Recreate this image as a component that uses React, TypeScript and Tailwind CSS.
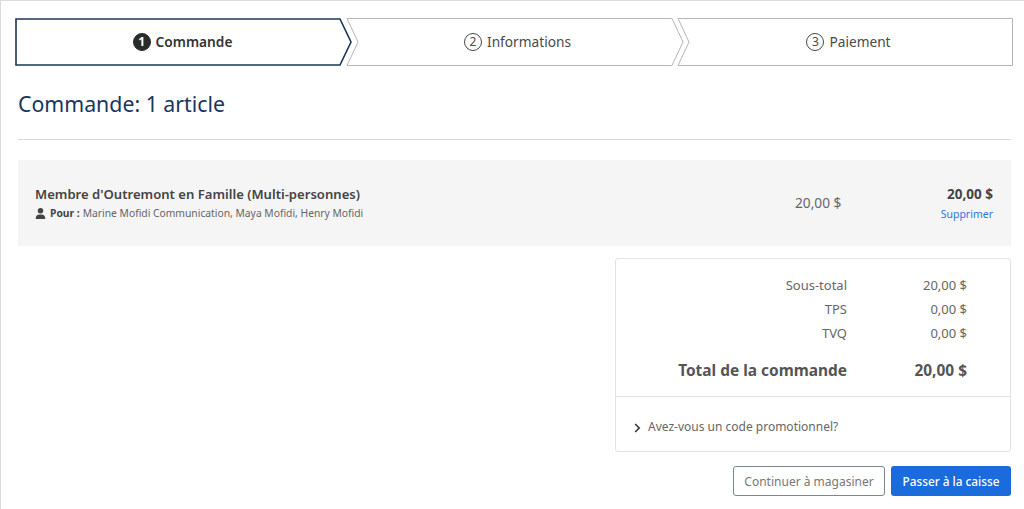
import React from "react";

const font = { fontFamily: "'Noto Sans', sans-serif" };

const StepNumber = ({ n, active }: { n: number; active?: boolean }) => (
  <span
    className={`flex h-[18px] w-[18px] items-center justify-center rounded-full border text-[12px] leading-none ${
      active
        ? "border-[#2b2b2b] bg-[#2b2b2b] font-bold text-white"
        : "border-[#4a4a4a] text-[#4a4a4a]"
    }`}
  >
    {n}
  </span>
);

const Step = ({
  n,
  label,
  points,
  width,
  active,
  offset,
}: {
  n: number;
  label: string;
  points: string;
  width: number;
  active?: boolean;
  offset: string;
}) => (
  <div className={`relative flex h-12 shrink-0 items-center justify-center ${offset}`} style={{ width }}>
    <svg className="absolute inset-0" width={width} height={48} viewBox={`0 0 ${width} 48`} fill="none">
      <polygon
        points={points}
        stroke={active ? "#1d3557" : "#b5b5b5"}
        strokeWidth={active ? 1.6 : 1}
        fill="#fff"
      />
    </svg>
    <span className="relative flex items-center gap-[5px] pt-px">
      <StepNumber n={n} active={active} />
      <span className={`text-[13.7px] ${active ? "font-semibold text-[#333]" : "text-[#4a4a4a]"}`}>{label}</span>
    </span>
  </div>
);

const SummaryRow = ({ label, value }: { label: string; value: string }) => (
  <div className="flex h-6 items-center justify-end text-[13px] text-[#666]">
    <span>{label}</span>
    <span className="w-[120px] text-right">{value}</span>
  </div>
);

export default function App() {
  return (
    <div style={font} className="h-[509px] w-[1024px] overflow-hidden border-l border-t border-[#dcdcdc] bg-white">
      {/* Steps */}
      <div className="ml-[14px] mt-[17px] flex">
        <Step n={1} label="Commande" active width={338} offset="pr-[3px]" points="1,1 325,1 336,24 325,47 1,47" />
        <Step
          n={2}
          label="Informations"
          width={338}
          offset="-ml-[7px] pl-[5px]"
          points="1,0.5 326,0.5 337,24 326,47.5 1,47.5 12,24"
        />
        <Step
          n={3}
          label="Paiement"
          width={336}
          offset="-ml-[7px] pl-[7px]"
          points="1,0.5 335.5,0.5 335.5,47.5 1,47.5 12,24"
        />
      </div>

      <div className="ml-[17px] w-[993px]">
        <h1 className="mt-[22px] text-[21.3px] leading-[32px] text-[#17375e]">Commande: 1 article</h1>
        <div className="mt-[19px] border-t border-[#d9d9d9]" />

        {/* Item */}
        <div className="mt-5 flex h-[86px] items-center bg-[#f5f5f5] pl-[17px] pr-[18px]">
          <div className="flex-1">
            <div className="text-[13.1px] font-semibold leading-[18px] text-[#444]">
              Membre d'Outremont en Famille (Multi-personnes)
            </div>
            <div className="mt-[2px] flex items-center text-[10.3px] leading-[16px] text-[#666]">
              <svg width="11" height="11" viewBox="0 0 448 512" fill="#444" className="mr-[4px]">
                <path d="M224 256a128 128 0 1 0 0-256 128 128 0 0 0 0 256zm-45.7 48C79.8 304 0 383.8 0 482.3 0 498.7 13.3 512 29.7 512h388.6c16.4 0 29.7-13.3 29.7-29.7C448 383.8 368.2 304 269.7 304h-91.4z" />
              </svg>
              <span className="mr-[3px] font-bold text-[#444]">Pour :</span>
              Marine Mofidi Communication, Maya Mofidi, Henry Mofidi
            </div>
          </div>
          <div className="w-[143px] text-[13.7px] text-[#666]">20,00 $</div>
          <div className="w-[55px] text-right">
            <div className="text-[13.5px] font-bold leading-[18px] text-[#444]">20,00 $</div>
            <div className="mt-[3px] text-[10.5px] leading-[16px] text-[#2f74e0]">Supprimer</div>
          </div>
        </div>

        {/* Summary */}
        <div className="ml-auto mt-3 h-[194px] w-[396px] rounded-[3px] border border-[#e3e3e3]">
          <div className="h-[138px] border-b border-[#e3e3e3] pr-[43px] pt-[15px]">
            <SummaryRow label="Sous-total" value="20,00 $" />
            <SummaryRow label="TPS" value="0,00 $" />
            <SummaryRow label="TVQ" value="0,00 $" />
            <div className="mt-[12px] flex items-center justify-end text-[15.45px] font-bold leading-[24px] text-[#555]">
              <span>Total de la commande</span>
              <span className="w-[120px] text-right">20,00 $</span>
            </div>
          </div>
          <div className="flex items-center pl-[18px] pt-[21px] text-[12px] leading-[18px] text-[#666]">
            <svg width="7" height="10" viewBox="0 0 7 10" fill="none" stroke="#333" strokeWidth="1.6" className="mr-[7px] mt-[1px]">
              <path d="M1.2 1 5.2 5 1.2 9" />
            </svg>
            Avez-vous un code promotionnel?
          </div>
        </div>

        {/* Actions */}
        <div className="mt-[14px] flex justify-end gap-[6px]">
          <button className="h-[30px] w-[152px] rounded-[3px] border border-[#7d8790] bg-white pt-px text-[12px] text-[#777]">
            Continuer à magasiner
          </button>
          <button className="h-[30px] w-[120px] rounded-[3px] bg-[#1a6bdc] pt-px text-[11.8px] font-medium text-white">
            Passer à la caisse
          </button>
        </div>
      </div>
    </div>
  );
}
